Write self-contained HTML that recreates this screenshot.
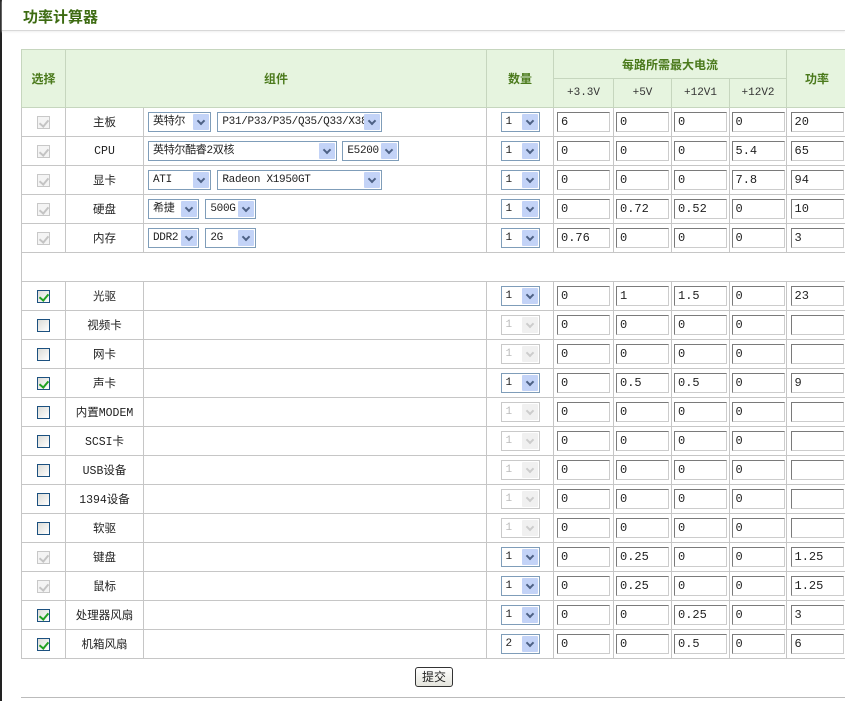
<!DOCTYPE html>
<html><head><meta charset="utf-8"><style>
*{box-sizing:border-box}
body{margin:0;width:845px;height:701px;overflow:hidden;background:#fff;font-family:"Liberation Sans","Noto Sans CJK SC",sans-serif;font-size:12px;color:#222;position:relative}
.frame{position:absolute;left:0;top:0;width:845px;height:701px;border-left:2px solid #222;}
.title{position:absolute;left:2px;top:0;width:843px;height:31px;border-bottom:1px solid #d8d8d8;box-shadow:0 1px 2px #eee}
.title b{position:absolute;left:21px;top:6px;font-size:15px;color:#3d6b12;font-family:"Noto Sans CJK SC",sans-serif;font-weight:bold}
table{position:absolute;left:21px;top:49px;border-collapse:collapse;table-layout:fixed;width:826px}
td,th{border:1px solid #c6c6c6;height:29px;padding:0;text-align:center;font-weight:normal;white-space:nowrap;overflow:hidden}
th{background:#e6f4df;color:#4b7a1c;font-weight:bold;font-family:"Noto Sans CJK SC",sans-serif;border-color:#c6d6be;font-size:12px}
th.s{font-weight:normal;color:#333;font-family:"Liberation Mono",monospace;font-size:11px}
td.l{text-align:left;padding-left:4px}
td.n{font-family:"Liberation Mono","Noto Sans CJK SC",monospace;font-size:11.5px}
.cb{display:inline-block;width:13px;height:13px;border:1px solid #1c5180;background:linear-gradient(135deg,#dcdcd7,#fff);vertical-align:middle;position:relative}
.cb.dis{border-color:#c8c8c8;background:#f4f4f4}
.cb.on::after,.cb.dis::after{content:"";position:absolute;left:3px;top:1px;width:4px;height:7px;border:solid #21a121;border-width:0 2px 2px 0;transform:rotate(40deg)}
.cb.dis::after{border-color:#c4c4c4}
.sel{display:inline-block;height:20px;border:1px solid #7f9db9;vertical-align:middle;position:relative;text-align:left;padding-left:4px;line-height:18px;font-size:11px;background:#fff;font-family:"Liberation Mono","Noto Sans CJK SC",monospace;overflow:hidden;letter-spacing:-0.3px}
.sel i{position:absolute;right:1px;top:1px;width:16px;height:16px;background:#c3d3f7;border-radius:1px}
.sel i::after{content:"";position:absolute;left:5px;top:4px;width:4px;height:4px;border:solid #4d6185;border-width:0 2px 2px 0;transform:rotate(45deg)}
.sel.dis{color:#bbb;border-color:#c9c9c9}
.sel.dis i{background:#f0f0f0}
.sel.dis i::after{border-color:#ccc}
.q{width:39px}
.in{display:inline-block;width:53px;height:20px;border:1px solid #7a7a7a;border-right-color:#ccc;border-bottom-color:#ccc;text-align:left;padding-left:3px;line-height:18px;font-family:"Liberation Mono",monospace;font-size:12px;vertical-align:middle}
.btn{position:absolute;left:415px;top:667px;width:38px;height:20px;border:1px solid #333;border-radius:3px;background:linear-gradient(#fff,#e4e4dc);font-size:12px;text-align:center;line-height:18px;font-family:"Noto Sans CJK SC",sans-serif}
.bot{position:absolute;left:21px;top:697px;width:824px;border-top:1px solid #bbb}
</style></head><body>
<div class="frame"></div>
<div class="title"><b>功率计算器</b></div>
<table>
<colgroup><col style="width:44px"><col style="width:78px"><col style="width:343px"><col style="width:67px"><col style="width:60px"><col style="width:58px"><col style="width:58px"><col style="width:57px"><col style="width:61px"></colgroup>
<tr><th rowspan="2" style="height:58px">选择</th><th rowspan="2" colspan="2">组件</th><th rowspan="2">数量</th><th colspan="4">每路所需最大电流</th><th rowspan="2">功率</th></tr>
<tr><th class="s">+3.3V</th><th class="s">+5V</th><th class="s">+12V1</th><th class="s">+12V2</th></tr>
<tr><td><span class="cb dis"></span></td><td class="n">主板</td><td class="l"><span class="sel" style="width:63px">英特尔<i></i></span> <span class="sel" style="width:165px;margin-left:3px">P31/P33/P35/Q35/Q33/X38<i></i></span></td><td><span class="sel q">1<i></i></span></td><td><span class="in">6</span></td><td><span class="in">0</span></td><td><span class="in">0</span></td><td><span class="in">0</span></td><td><span class="in">20</span></td></tr>
<tr><td><span class="cb dis"></span></td><td class="n">CPU</td><td class="l"><span class="sel" style="width:189px">英特尔酷睿2双核<i></i></span> <span class="sel" style="width:57px;margin-left:2px">E5200<i></i></span></td><td><span class="sel q">1<i></i></span></td><td><span class="in">0</span></td><td><span class="in">0</span></td><td><span class="in">0</span></td><td><span class="in">5.4</span></td><td><span class="in">65</span></td></tr>
<tr><td><span class="cb dis"></span></td><td class="n">显卡</td><td class="l"><span class="sel" style="width:63px">ATI<i></i></span> <span class="sel" style="width:165px;margin-left:3px">Radeon X1950GT<i></i></span></td><td><span class="sel q">1<i></i></span></td><td><span class="in">0</span></td><td><span class="in">0</span></td><td><span class="in">0</span></td><td><span class="in">7.8</span></td><td><span class="in">94</span></td></tr>
<tr><td><span class="cb dis"></span></td><td class="n">硬盘</td><td class="l"><span class="sel" style="width:51px">希捷<i></i></span> <span class="sel" style="width:51px;margin-left:3px">500G<i></i></span></td><td><span class="sel q">1<i></i></span></td><td><span class="in">0</span></td><td><span class="in">0.72</span></td><td><span class="in">0.52</span></td><td><span class="in">0</span></td><td><span class="in">10</span></td></tr>
<tr><td><span class="cb dis"></span></td><td class="n">内存</td><td class="l"><span class="sel" style="width:51px">DDR2<i></i></span> <span class="sel" style="width:51px;margin-left:3px">2G<i></i></span></td><td><span class="sel q">1<i></i></span></td><td><span class="in">0.76</span></td><td><span class="in">0</span></td><td><span class="in">0</span></td><td><span class="in">0</span></td><td><span class="in">3</span></td></tr>
<tr><td colspan="9"></td></tr>
<tr><td><span class="cb on"></span></td><td class="n">光驱</td><td></td><td><span class="sel q">1<i></i></span></td><td><span class="in">0</span></td><td><span class="in">1</span></td><td><span class="in">1.5</span></td><td><span class="in">0</span></td><td><span class="in">23</span></td></tr>
<tr><td><span class="cb"></span></td><td class="n">视频卡</td><td></td><td><span class="sel q dis">1<i></i></span></td><td><span class="in">0</span></td><td><span class="in">0</span></td><td><span class="in">0</span></td><td><span class="in">0</span></td><td><span class="in"></span></td></tr>
<tr><td><span class="cb"></span></td><td class="n">网卡</td><td></td><td><span class="sel q dis">1<i></i></span></td><td><span class="in">0</span></td><td><span class="in">0</span></td><td><span class="in">0</span></td><td><span class="in">0</span></td><td><span class="in"></span></td></tr>
<tr><td><span class="cb on"></span></td><td class="n">声卡</td><td></td><td><span class="sel q">1<i></i></span></td><td><span class="in">0</span></td><td><span class="in">0.5</span></td><td><span class="in">0.5</span></td><td><span class="in">0</span></td><td><span class="in">9</span></td></tr>
<tr><td><span class="cb"></span></td><td class="n">内置MODEM</td><td></td><td><span class="sel q dis">1<i></i></span></td><td><span class="in">0</span></td><td><span class="in">0</span></td><td><span class="in">0</span></td><td><span class="in">0</span></td><td><span class="in"></span></td></tr>
<tr><td><span class="cb"></span></td><td class="n">SCSI卡</td><td></td><td><span class="sel q dis">1<i></i></span></td><td><span class="in">0</span></td><td><span class="in">0</span></td><td><span class="in">0</span></td><td><span class="in">0</span></td><td><span class="in"></span></td></tr>
<tr><td><span class="cb"></span></td><td class="n">USB设备</td><td></td><td><span class="sel q dis">1<i></i></span></td><td><span class="in">0</span></td><td><span class="in">0</span></td><td><span class="in">0</span></td><td><span class="in">0</span></td><td><span class="in"></span></td></tr>
<tr><td><span class="cb"></span></td><td class="n">1394设备</td><td></td><td><span class="sel q dis">1<i></i></span></td><td><span class="in">0</span></td><td><span class="in">0</span></td><td><span class="in">0</span></td><td><span class="in">0</span></td><td><span class="in"></span></td></tr>
<tr><td><span class="cb"></span></td><td class="n">软驱</td><td></td><td><span class="sel q dis">1<i></i></span></td><td><span class="in">0</span></td><td><span class="in">0</span></td><td><span class="in">0</span></td><td><span class="in">0</span></td><td><span class="in"></span></td></tr>
<tr><td><span class="cb dis"></span></td><td class="n">键盘</td><td></td><td><span class="sel q">1<i></i></span></td><td><span class="in">0</span></td><td><span class="in">0.25</span></td><td><span class="in">0</span></td><td><span class="in">0</span></td><td><span class="in">1.25</span></td></tr>
<tr><td><span class="cb dis"></span></td><td class="n">鼠标</td><td></td><td><span class="sel q">1<i></i></span></td><td><span class="in">0</span></td><td><span class="in">0.25</span></td><td><span class="in">0</span></td><td><span class="in">0</span></td><td><span class="in">1.25</span></td></tr>
<tr><td><span class="cb on"></span></td><td class="n">处理器风扇</td><td></td><td><span class="sel q">1<i></i></span></td><td><span class="in">0</span></td><td><span class="in">0</span></td><td><span class="in">0.25</span></td><td><span class="in">0</span></td><td><span class="in">3</span></td></tr>
<tr><td><span class="cb on"></span></td><td class="n">机箱风扇</td><td></td><td><span class="sel q">2<i></i></span></td><td><span class="in">0</span></td><td><span class="in">0</span></td><td><span class="in">0.5</span></td><td><span class="in">0</span></td><td><span class="in">6</span></td></tr>
</table>
<div class="btn">提交</div>
<div class="bot"></div>
</body></html>
